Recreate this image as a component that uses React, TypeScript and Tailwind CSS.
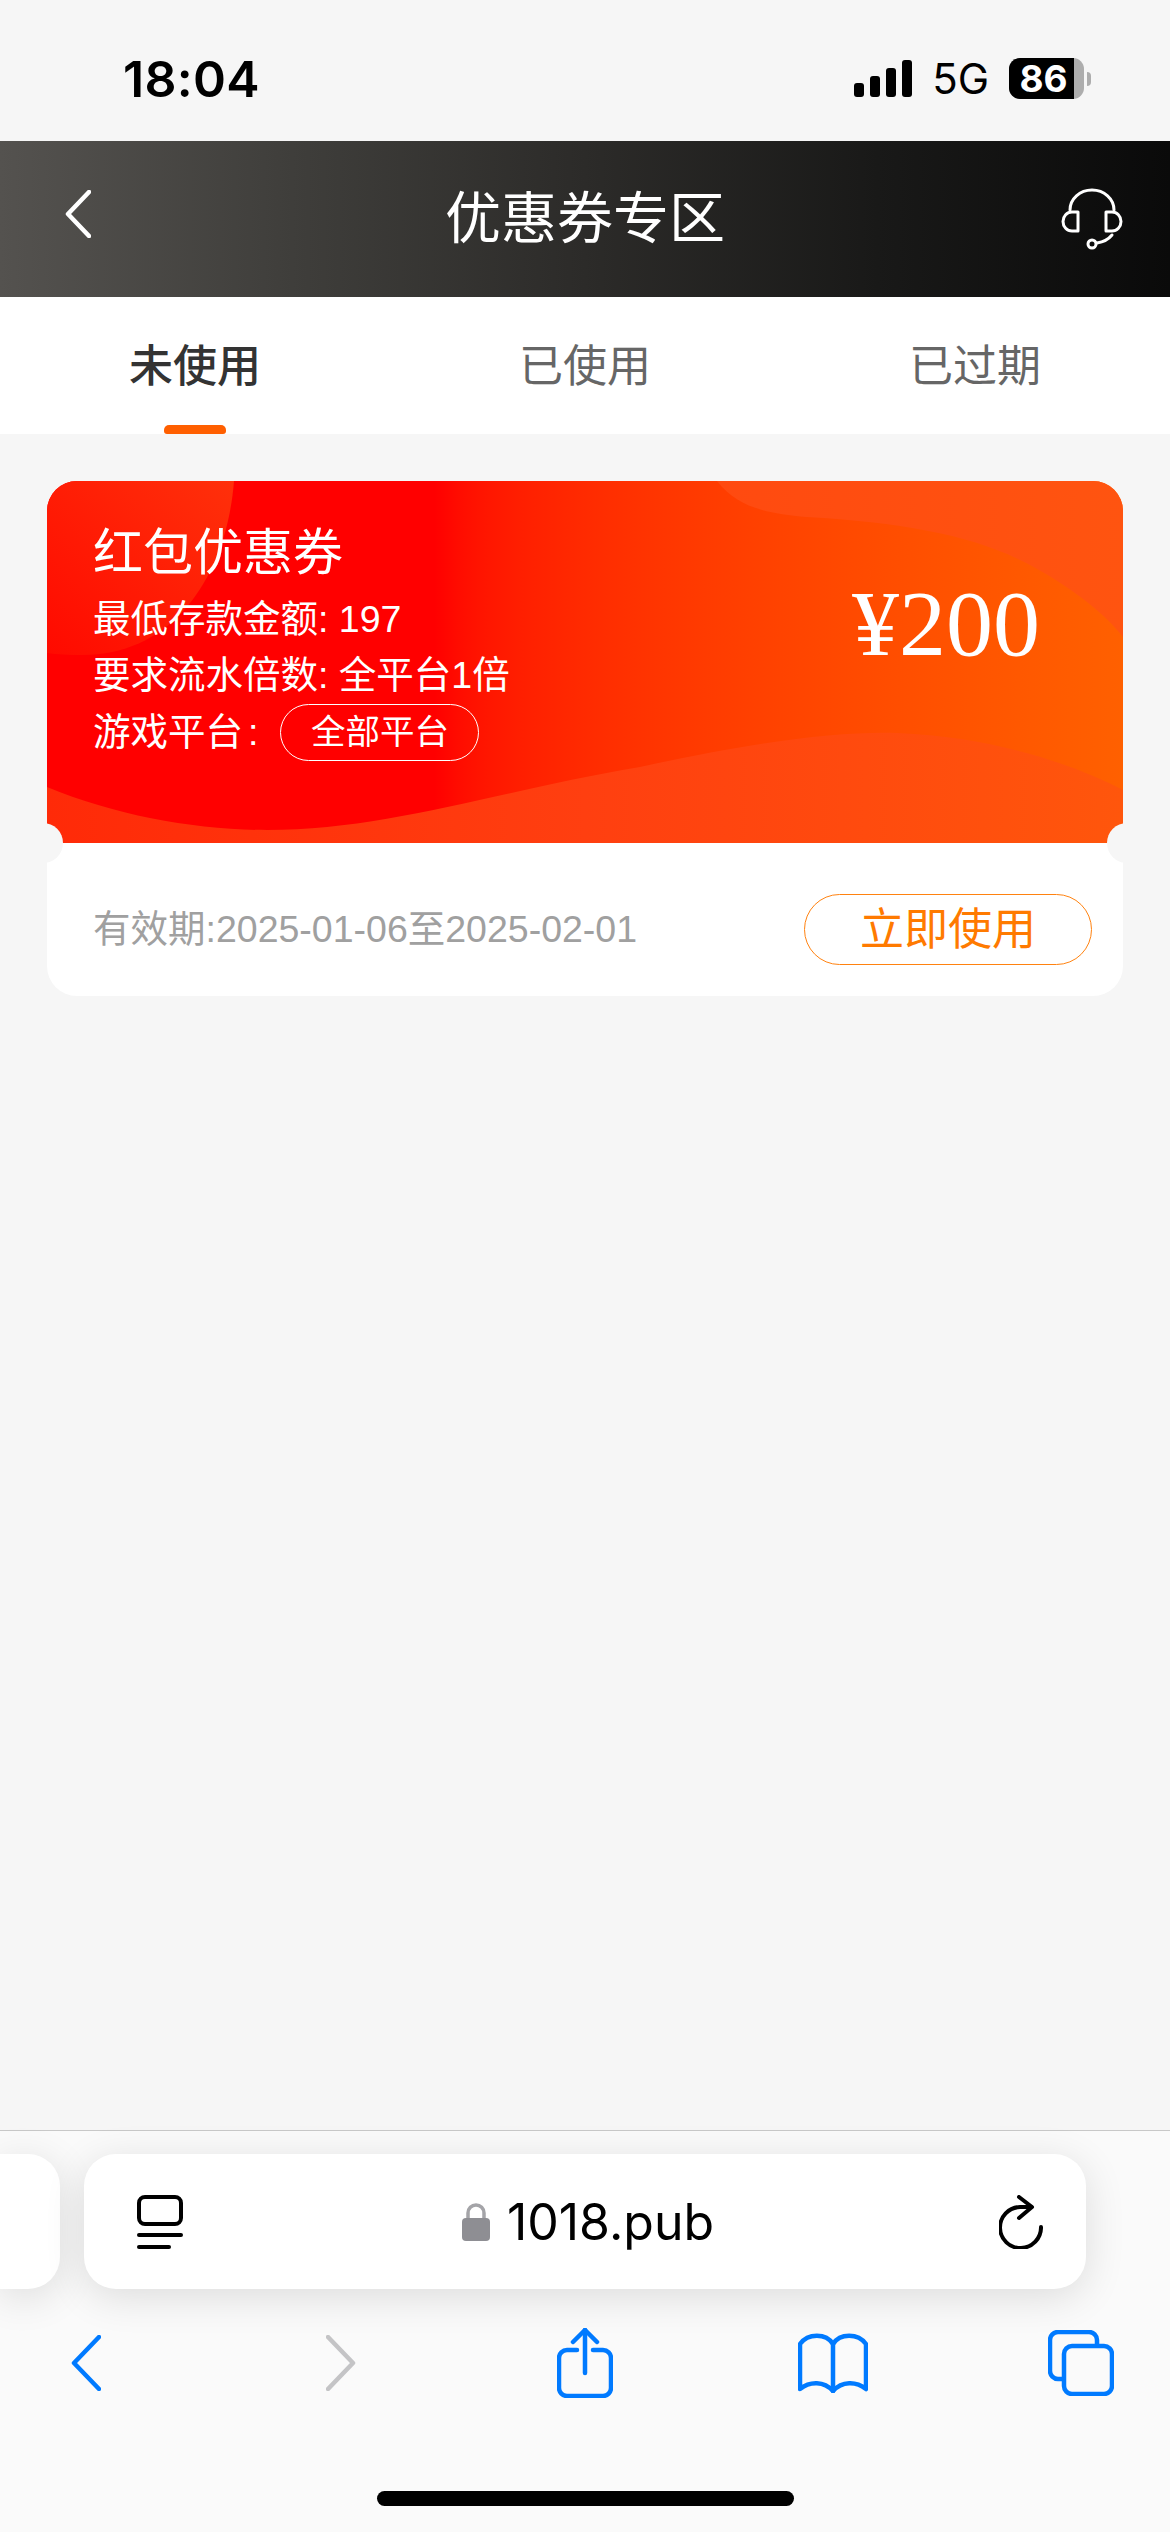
import React from 'react';

const StatusBar: React.FC = () => (
  <div className="flex h-[141px] shrink-0 items-center justify-between bg-[#f6f6f6] pl-[123px] pr-[79px] pt-[16px] font-['Inter',sans-serif] text-black">
    <span className="text-[50px] font-semibold leading-none tracking-[0.3px]">18:04</span>
    <div className="flex items-center">
      <svg width="58" height="37" viewBox="0 0 58 37" fill="#000">
        <rect x="0" y="23" width="10" height="14" rx="3" />
        <rect x="16" y="16" width="10" height="21" rx="3" />
        <rect x="32" y="8" width="10" height="29" rx="3" />
        <rect x="48" y="0" width="10" height="37" rx="3" />
      </svg>
      <span className="ml-[20px] text-[42px] leading-none">5G</span>
      <div className="ml-[20px] flex h-[41px] w-[75px] rounded-[11px] bg-[#adadad]">
        <div className="flex h-full w-[65px] items-center justify-center rounded-l-[11px] bg-black pl-[4px] text-[37px] font-bold leading-none text-white">
          86
        </div>
      </div>
      <div className="ml-[3px] h-[14px] w-[4px] rounded-r-full bg-[#adadad]" />
    </div>
  </div>
);

const Header: React.FC = () => (
  <header className="flex h-[156px] shrink-0 items-center justify-between bg-[linear-gradient(90deg,#54524f_0%,#3f3e3b_25%,#2c2b29_50%,#191918_75%,#0a0a0a_100%)] pl-[65px] pr-[47px] text-white">
    <svg width="26" height="48" viewBox="0 0 26 48" fill="none" stroke="#fff" strokeWidth="4.5" strokeLinecap="round" strokeLinejoin="round" className="mb-[10px]">
      <path d="M24 2 L3 24 L24 46" />
    </svg>
    <h1 className="ml-[18px] text-[56px] font-normal leading-none">优惠券专区</h1>
    <svg width="62" height="62" viewBox="0 0 62 62" fill="none" stroke="#fff" strokeWidth="3" strokeLinecap="round" strokeLinejoin="round">
      <path d="M9 22 A22 20 0 0 1 53 22" />
      <path d="M17 24 H11 a9 9.5 0 0 0 0 19 H17 Z" />
      <path d="M45 24 H51 a9 9.5 0 0 1 0 19 H45 Z" />
      <path d="M51 47 C47 52 42 54 36 55" />
      <circle cx="31" cy="56" r="4" />
    </svg>
  </header>
);

const Tabs: React.FC = () => (
  <nav className="grid h-[137px] shrink-0 grid-cols-3 bg-white text-[44px] leading-none">
    <div className="relative flex items-center justify-center pt-[2px] font-medium text-[#333]">
      未使用
      <span className="absolute bottom-0 left-[164px] h-[9px] w-[62px] rounded-t-[5px] rounded-b-[3px] bg-[#ff5f00]" />
    </div>
    <div className="flex items-center justify-center pt-[2px] text-[#666]">已使用</div>
    <div className="flex items-center justify-center pt-[2px] text-[#666]">已过期</div>
  </nav>
);

const CouponArt: React.FC = () => (
  <svg className="absolute inset-0" width="1076" height="362" viewBox="0 0 1076 362" fill="none">
    <defs>
      <linearGradient id="corner" x1="0" y1="1" x2="1" y2="0">
        <stop offset="0" stopColor="#ff0a00" />
        <stop offset="1" stopColor="#ff300a" />
      </linearGradient>
      <linearGradient id="blob" x1="0" y1="0" x2="1" y2="0">
        <stop offset="0" stopColor="#ff4a10" />
        <stop offset="1" stopColor="#ff5410" />
      </linearGradient>
      <linearGradient id="wave" x1="0" y1="0" x2="1" y2="0">
        <stop offset="0" stopColor="#ff2a08" />
        <stop offset="0.5" stopColor="#ff3f10" />
        <stop offset="1" stopColor="#ff560c" />
      </linearGradient>
    </defs>
    <path d="M0 0 H187 C180 90 130 174 35 174 Q15 174 0 172 Z" fill="url(#corner)" />
    <path d="M670 0 C690 25 715 32 760 36 C860 42 930 55 985 85 C1030 110 1060 135 1076 156 V0 Z" fill="url(#blob)" />
    <path d="M0 306 C70 335 150 349 220 349 C340 349 450 310 593 286 C700 262 790 250 850 252 C950 256 1030 285 1076 309 V362 H0 Z" fill="url(#wave)" />
  </svg>
);

const CouponCard: React.FC = () => (
  <div className="relative overflow-hidden rounded-[30px] bg-white">
    <div className="relative flex h-[362px] justify-between overflow-hidden bg-gradient-to-r from-[#ff0000] from-36% via-[#ff3c00] via-62% to-[#ff6000] text-white">
      <CouponArt />
      <div className="relative flex flex-col pl-[46px] pt-[41px]">
        <div className="mb-[7px] text-[50px] leading-[62px]">红包优惠券</div>
        <div className="text-[37.5px] leading-[56px]">最低存款金额: 197</div>
        <div className="text-[37.5px] leading-[56px]">要求流水倍数: 全平台1倍</div>
        <div className="flex h-[58px] items-center text-[37.5px] leading-none">
          <span className="pt-[2px]">游戏平台</span>
          <span className="ml-[5px] pt-[2px]">:</span>
          <span className="ml-[22px] flex h-[57px] w-[199px] items-center justify-center rounded-full border border-white text-[34.5px]">
            全部平台
          </span>
        </div>
      </div>
      <div className="relative pr-[83px] pt-[92px] font-['Liberation_Serif',serif] text-[94px] leading-[100px]">¥200</div>
    </div>
    <div className="flex h-[153px] items-center justify-between pl-[46px] pr-[31px] pt-[20px]">
      <span className="text-[37.5px] leading-none text-[#a0a0a0]">有效期:2025-01-06至2025-02-01</span>
      <button className="flex h-[71px] w-[288px] items-center justify-center rounded-full border border-[#ff8210] text-[44px] leading-none text-[#ff7a00]">
        立即使用
      </button>
    </div>
    <span className="absolute left-[-24px] top-[342px] h-[40px] w-[40px] rounded-full bg-[#f6f6f6]" />
    <span className="absolute right-[-24px] top-[342px] h-[40px] w-[40px] rounded-full bg-[#f6f6f6]" />
  </div>
);

const AddressBar: React.FC = () => (
  <div className="flex h-[135px] gap-[24px]">
    <div className="h-full w-[60px] rounded-r-[32px] bg-white shadow-[0_8px_40px_rgba(0,0,0,0.12)]" />
    <div className="flex h-full w-[1002px] items-center justify-between rounded-[32px] bg-white pl-[53px] pr-[43px] shadow-[0_8px_40px_rgba(0,0,0,0.12)]">
      <svg width="46" height="54" viewBox="0 0 46 54" fill="none" stroke="#000" strokeWidth="4" strokeLinecap="round">
        <rect x="2" y="2" width="42" height="27" rx="6" />
        <path d="M2 40 H44" />
        <path d="M2 52 H32" />
      </svg>
      <div className="mr-[6px] flex items-center">
        <svg width="28" height="38" viewBox="0 0 28 38" fill="none">
          <path d="M6 17 V10 a8 8 0 0 1 16 0 V17" stroke="#a4a4a8" strokeWidth="3.5" />
          <rect x="0" y="15" width="28" height="23" rx="4" fill="#8e8e93" />
        </svg>
        <span className="ml-[17px] font-['Inter',sans-serif] text-[50px] leading-none text-black">1018.pub</span>
      </div>
      <svg width="44" height="54" viewBox="0 0 44 54" fill="none" stroke="#000" strokeWidth="4" strokeLinecap="round" strokeLinejoin="round">
        <path d="M42 32 A20.5 20.5 0 1 1 21 12 H32" />
        <path d="M20 2 L33 12 L20 23" />
      </svg>
    </div>
  </div>
);

const Toolbar: React.FC = () => (
  <div className="mt-[39px] flex h-[70px] items-center pl-[71px]">
    <svg width="30" height="56" viewBox="0 0 30 56" fill="none" stroke="#007aff" strokeWidth="4.5" strokeLinecap="round" strokeLinejoin="round">
      <path d="M28 2 L3 28 L28 54" />
    </svg>
    <svg width="30" height="56" viewBox="0 0 30 56" fill="none" stroke="#c4c4c6" strokeWidth="4.5" strokeLinecap="round" strokeLinejoin="round" className="ml-[225px]">
      <path d="M2 2 L27 28 L2 54" />
    </svg>
    <svg width="56" height="70" viewBox="0 0 56 70" fill="none" stroke="#007aff" strokeWidth="4.5" strokeLinecap="round" strokeLinejoin="round" className="ml-[201px]">
      <path d="M20 22 H10 a8 8 0 0 0 -8 8 V60 a8 8 0 0 0 8 8 H46 a8 8 0 0 0 8 -8 V30 a8 8 0 0 0 -8 -8 H36" />
      <path d="M28 45 V2" />
      <path d="M16 14 L28 2 L40 14" />
    </svg>
    <svg width="70" height="60" viewBox="0 0 70 60" fill="none" stroke="#007aff" strokeWidth="4.5" strokeLinecap="round" strokeLinejoin="round" className="ml-[185px]">
      <path d="M35 11 C28 0 10 0 2 11 V56 C12 48 26 48 35 58 C44 48 58 48 68 56 V11 C60 0 42 0 35 11 Z" />
      <path d="M35 11 V58" />
    </svg>
    <svg width="66" height="66" viewBox="0 0 66 66" fill="none" stroke="#007aff" strokeWidth="4.5" strokeLinecap="round" strokeLinejoin="round" className="ml-[180px]">
      <rect x="16" y="16" width="48" height="48" rx="8" />
      <path d="M49 14 V10 a8 8 0 0 0 -8 -8 H10 a8 8 0 0 0 -8 8 V41 a8 8 0 0 0 8 8 H14" />
    </svg>
  </div>
);

export default function App() {
  return (
    <div className="flex h-[2532px] w-[1170px] flex-col overflow-hidden bg-[#f6f6f6] font-['Liberation_Sans','Noto_Sans_CJK_SC',sans-serif]">
      <StatusBar />
      <Header />
      <Tabs />
      <main className="flex-1 px-[47px] pt-[47px]">
        <CouponCard />
      </main>
      <footer className="h-[402px] shrink-0 border-t border-[#c8c8c8] bg-[#fafafa] pt-[23px]">
        <AddressBar />
        <Toolbar />
        <div className="mx-auto mt-[93px] h-[15px] w-[417px] rounded-full bg-black" />
      </footer>
    </div>
  );
}
